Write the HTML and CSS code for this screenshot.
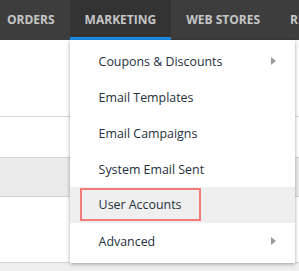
FILE: index.html
```html
<!DOCTYPE html>
<html>
<head>
<meta charset="utf-8">
<link rel="stylesheet" href="styles.css">
</head>
<body>
<div class="page">
  <nav class="topnav">
    <div class="tab">ORDERS</div>
    <div class="tab-wrap">
      <div class="tab active">MARKETING</div>
      <ul class="dropdown">
        <li class="item"><span>Coupons &amp; Discounts</span><svg class="arrow" width="5" height="8" viewBox="0 0 5 8"><path d="M0 0L5 4L0 8Z"/></svg></li>
        <li class="item"><span>Email Templates</span></li>
        <li class="item"><span>Email Campaigns</span></li>
        <li class="item"><span>System Email Sent</span></li>
        <li class="item item-hl"><span class="hl-box">User Accounts</span></li>
        <li class="item"><span>Advanced</span><svg class="arrow" width="5" height="8" viewBox="0 0 5 8"><path d="M0 0L5 4L0 8Z"/></svg></li>
      </ul>
    </div>
    <div class="tab">WEB STORES</div>
    <div class="tab">REPORTS</div>
  </nav>
  <div class="content">
    <div class="row row-a"></div>
    <div class="row row-b"></div>
    <div class="row row-band"></div>
    <div class="row row-c"></div>
    <div class="footer"></div>
  </div>
</div>
</body>
</html>
```

FILE: styles.css
```css
html, body {
  margin: 0;
  padding: 0;
  background: #fff;
  font-family: "Open Sans", "Liberation Sans", sans-serif;
  overflow: hidden;
}
.page {
  width: 299px;
  height: 271px;
  overflow: hidden;
}
.topnav {
  display: flex;
  height: 40px;
  background: #3d3d3d;
  margin-left: -8px;
  white-space: nowrap;
  position: relative;
  z-index: 2;
}
.tab {
  padding: 0 15px;
  line-height: 40px;
  height: 40px;
  font-size: 12px;
  font-weight: 700;
  color: #c6c6c6;
  box-sizing: border-box;
}
.tab.active {
  background: #333;
  box-shadow: inset 0 -3px 0 #1a8de9;
}
.tab-wrap {
  position: relative;
}
.dropdown {
  position: absolute;
  top: 100%;
  left: 0;
  width: 225px;
  margin: 0;
  padding: 3px 0 4px;
  list-style: none;
  background: #fff;
  box-shadow: 0 1px 4px rgba(0, 0, 0, 0.35);
}
.item {
  display: flex;
  align-items: center;
  justify-content: space-between;
  height: 36px;
  padding: 0 19px 0 29px;
  font-size: 12.4px;
  color: #25303d;
}
.arrow {
  fill: #9a9a9a;
}
.item-hl {
  background: #efefef;
  padding-left: 10px;
  align-items: flex-start;
}
.hl-box {
  display: flex;
  align-items: center;
  box-sizing: border-box;
  width: 121px;
  height: 33px;
  margin-top: 1px;
  padding: 0 0 0 17px;
  border: 2px solid #f57a7a;
  white-space: nowrap;
}
.content {
  position: relative;
  z-index: 1;
}
.row-a {
  height: 76px;
  border-bottom: 1px solid #dcdcdc;
}
.row-b {
  height: 40px;
}
.row-band {
  height: 38px;
  background: #ebebeb;
  border-top: 1px solid #d4d4d4;
  border-bottom: 1px solid #d4d4d4;
}
.row-c {
  height: 65px;
  border-bottom: 1px solid #d4d4d4;
}
.footer {
  height: 20px;
  background: #efefef;
}
```
